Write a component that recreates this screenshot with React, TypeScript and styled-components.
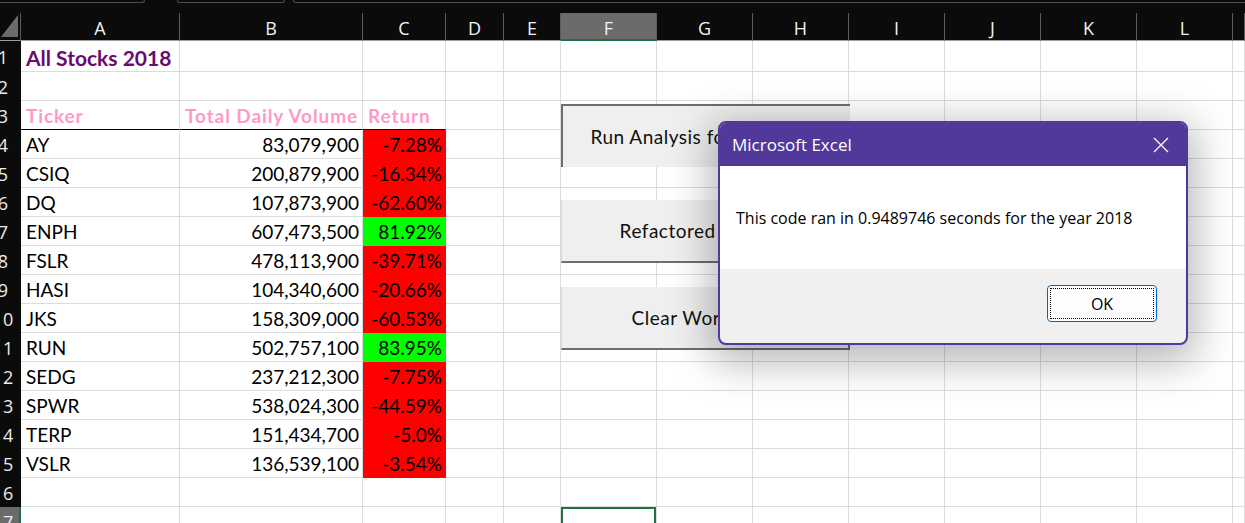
import React from "react";
import styled, { createGlobalStyle, css } from "styled-components";

const GlobalStyle = createGlobalStyle`
  html, body { margin: 0; padding: 0; background: #0b0b0b; }
  * { box-sizing: border-box; }
`;

const Screen = styled.div`
  position: relative;
  width: 1245px;
  height: 523px;
  overflow: hidden;
  background: #ffffff;
  display: flex;
  flex-direction: column;
`;

const TabStrip = styled.div`
  flex: none;
  height: 13px;
  background: #0b0b0b;
  display: flex;
  overflow: hidden;
`;

const Tab = styled.div<{ $w: number; $gap: number }>`
  flex: none;
  width: ${(p) => p.$w}px;
  margin-left: ${(p) => p.$gap}px;
  height: 3px;
  border: 1px solid #4d4d4d;
  border-top: none;
  border-radius: 0 0 6px 6px;
`;

const Sheet = styled.div`
  flex: none;
  display: grid;
  grid-template-columns: 21px 159px 183px 83px 58px 57px repeat(7, 96px) 1fr;
  grid-template-rows: 28px 31px repeat(16, 29px);
`;

const Corner = styled.div`
  position: relative;
  background: #0b0b0b;
  border-right: 1px solid #5c5c5c;
  border-bottom: 1px solid #9e9e9e;
  &::after {
    content: "";
    position: absolute;
    left: 1px;
    top: 2px;
    width: 17px;
    height: 22px;
    background: #6b6b6b;
    clip-path: polygon(100% 0, 100% 100%, 0 100%);
  }
`;

const ColHeader = styled.div<{ $active?: boolean }>`
  background: ${(p) => (p.$active ? "#6b6b6b" : "#0b0b0b")};
  color: #f2f2f2;
  font: 400 18px "Open Sans", sans-serif;
  display: flex;
  align-items: center;
  justify-content: center;
  padding-top: 3px;
  border-right: 1px solid #5c5c5c;
  border-bottom: 1px solid #9e9e9e;
  ${(p) =>
    p.$active &&
    css`
      border-bottom: 2px solid #1e7145;
    `}
`;

const RowHeader = styled.div<{ $active?: boolean }>`
  background: ${(p) => (p.$active ? "#6b6b6b" : "#0b0b0b")};
  overflow: hidden;
  display: flex;
  justify-content: flex-end;
  align-items: center;
  ${(p) =>
    p.$active &&
    css`
      box-shadow: inset -2px 0 0 #1e7145;
    `}
`;

const RowNum = styled.span`
  flex: none;
  width: 36px;
  text-align: center;
  color: #ececec;
  font: 400 18px "Open Sans", sans-serif;
`;

type Kind = "title" | "head" | "body";

const Cell = styled.div<{
  $align?: "left" | "right";
  $fill?: string;
  $kind?: Kind;
  $rule?: boolean;
  $selected?: boolean;
}>`
  min-width: 0;
  overflow: hidden;
  white-space: nowrap;
  display: flex;
  align-items: center;
  justify-content: ${(p) => (p.$align === "right" ? "flex-end" : "flex-start")};
  padding: ${(p) => (p.$align === "right" ? "0 3px 0 2px" : "0 2px 0 5px")};
  background: ${(p) => p.$fill ?? "#ffffff"};
  border-right: 1px solid ${(p) => p.$fill ?? "#dcdcdc"};
  border-bottom: 1px solid
    ${(p) => (p.$rule ? "#000000" : p.$fill ?? "#dcdcdc")};
  font-family: Lato, "Open Sans", sans-serif;
  font-size: 19px;
  color: #000;
  ${(p) =>
    p.$kind === "title" &&
    css`
      font-size: 21px;
      font-weight: 700;
      color: #6c0a6e;
      padding-top: 2px;
    `}
  ${(p) =>
    p.$kind === "head" &&
    css`
      font-weight: 700;
      letter-spacing: 0.9px;
      color: #ff99cc;
    `}
  ${(p) =>
    p.$selected &&
    css`
      box-shadow: inset 0 0 0 2px #1e7145;
    `}
`;

const MacroButton = styled.div<{ $top: number; $edges: "pressed" | "bottom" | "raised" }>`
  position: absolute;
  left: 561px;
  top: ${(p) => p.$top}px;
  width: 289px;
  height: 63px;
  background: #efefef;
  display: flex;
  align-items: center;
  justify-content: center;
  font: 400 19px Lato, "Open Sans", sans-serif;
  letter-spacing: 0.5px;
  color: #111;
  white-space: nowrap;
  border-style: solid;
  border-color: #6e6e6e;
  ${(p) =>
    p.$edges === "pressed" &&
    css`
      border-width: 2px 0 0 2px;
    `}
  ${(p) =>
    p.$edges === "bottom" &&
    css`
      border-width: 0 0 2px 1px;
      border-left-color: #d6d6d6;
    `}
  ${(p) =>
    p.$edges === "raised" &&
    css`
      border-width: 0 2px 2px 1px;
      border-left-color: #d6d6d6;
    `}
`;

const Dialog = styled.div`
  position: absolute;
  left: 718px;
  top: 121px;
  width: 470px;
  height: 224px;
  border: 2px solid #51389b;
  border-radius: 8px;
  overflow: hidden;
  background: #f0f0f0;
  display: flex;
  flex-direction: column;
  box-shadow: 0 10px 40px 8px rgba(0, 0, 0, 0.28);
  font-family: "Open Sans", "Noto Sans", sans-serif;
`;

const TitleBar = styled.div`
  flex: none;
  height: 43px;
  background: #51389b;
  color: #ffffff;
  display: flex;
  align-items: center;
  justify-content: space-between;
  padding: 0 17px 0 12px;
  font-size: 17px;
`;

const DialogBody = styled.div`
  flex: none;
  height: 103px;
  background: #ffffff;
  display: flex;
  align-items: center;
  padding-left: 16px;
  font-size: 16px;
  color: #000;
`;

const DialogFooter = styled.div`
  flex: 1;
  display: flex;
  justify-content: flex-end;
  align-items: flex-start;
  padding: 16px 29px 0 0;
`;

const OkButton = styled.button`
  position: relative;
  width: 110px;
  height: 37px;
  border: 1px solid #0067c0;
  border-radius: 4px;
  background: #fdfdfd;
  font: 400 16px "Open Sans", sans-serif;
  color: #000;
  padding: 0;
  &::after {
    content: "";
    position: absolute;
    inset: 2px;
    border: 1px dotted #000;
  }
`;

const CloseIcon = () => (
  <svg width="16" height="16" viewBox="0 0 16 16" aria-hidden="true">
    <path d="M1 1 L15 15 M15 1 L1 15" stroke="#ffffff" strokeWidth="1.3" fill="none" />
  </svg>
);

const columns = ["A", "B", "C", "D", "E", "F", "G", "H", "I", "J", "K", "L", ""];
const ACTIVE_COL = "F";

type Stock = [string, string, string];
const stocks: Stock[] = [
  ["AY", "83,079,900", "-7.28%"],
  ["CSIQ", "200,879,900", "-16.34%"],
  ["DQ", "107,873,900", "-62.60%"],
  ["ENPH", "607,473,500", "81.92%"],
  ["FSLR", "478,113,900", "-39.71%"],
  ["HASI", "104,340,600", "-20.66%"],
  ["JKS", "158,309,000", "-60.53%"],
  ["RUN", "502,757,100", "83.95%"],
  ["SEDG", "237,212,300", "-7.75%"],
  ["SPWR", "538,024,300", "-44.59%"],
  ["TERP", "151,434,700", "-5.0%"],
  ["VSLR", "136,539,100", "-3.54%"],
];

type CellSpec = {
  text?: string;
  align?: "left" | "right";
  fill?: string;
  kind?: Kind;
  rule?: boolean;
};

function rowCells(row: number): CellSpec[] {
  const cells: CellSpec[] = columns.map(() => ({}));
  if (row === 1) {
    cells[0] = { text: "All Stocks 2018", kind: "title" };
  } else if (row === 3) {
    cells[0] = { text: "Ticker", kind: "head", rule: true };
    cells[1] = { text: "Total Daily Volume", kind: "head", rule: true };
    cells[2] = { text: "Return", kind: "head", rule: true };
  } else if (row >= 4 && row <= 15) {
    const [t, v, r] = stocks[row - 4];
    const positive = !r.startsWith("-");
    cells[0] = { text: t };
    cells[1] = { text: v, align: "right" };
    cells[2] = { text: r, align: "right", fill: positive ? "#00ff00" : "#ff0000" };
  }
  return cells;
}

export default function App() {
  const rows = Array.from({ length: 17 }, (_, i) => i + 1);
  return (
    <>
      <GlobalStyle />
      <Screen>
        <TabStrip>
          <Tab $w={165} $gap={-20} />
          <Tab $w={108} $gap={32} />
          <Tab $w={1000} $gap={8} />
        </TabStrip>
        <Sheet>
          <Corner />
          {columns.map((c, i) => (
            <ColHeader key={"h" + i} $active={c === ACTIVE_COL}>
              {c}
            </ColHeader>
          ))}
          {rows.map((r) => (
            <React.Fragment key={r}>
              <RowHeader $active={r === 17}>
                <RowNum>{r}</RowNum>
              </RowHeader>
              {rowCells(r).map((c, ci) => (
                <Cell
                  key={ci}
                  $align={c.align}
                  $fill={c.fill}
                  $kind={c.kind}
                  $rule={c.rule}
                  $selected={r === 17 && columns[ci] === ACTIVE_COL}
                >
                  {c.text}
                </Cell>
              ))}
            </React.Fragment>
          ))}
        </Sheet>

        <MacroButton $top={104} $edges="pressed">
          Run Analysis for All Stocks
        </MacroButton>
        <MacroButton $top={200} $edges="bottom">
          Refactored Analysis
        </MacroButton>
        <MacroButton $top={287} $edges="raised">
          Clear Worksheet
        </MacroButton>

        <Dialog role="dialog" aria-label="Microsoft Excel">
          <TitleBar>
            <span>Microsoft Excel</span>
            <CloseIcon />
          </TitleBar>
          <DialogBody>This code ran in 0.9489746 seconds for the year 2018</DialogBody>
          <DialogFooter>
            <OkButton>OK</OkButton>
          </DialogFooter>
        </Dialog>
      </Screen>
    </>
  );
}
